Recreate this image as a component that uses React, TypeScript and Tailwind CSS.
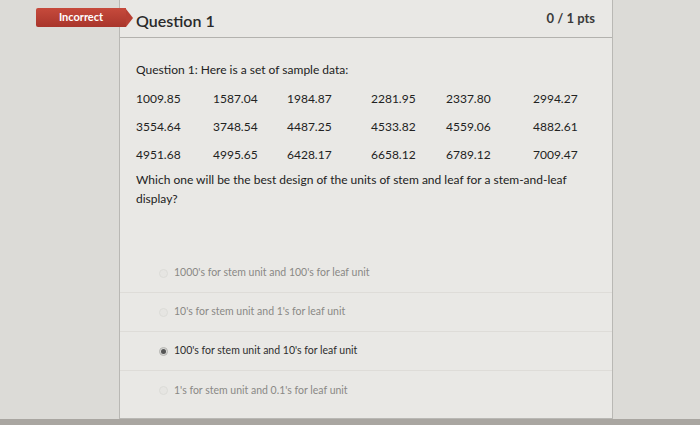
const rows = [
  ["1009.85", "1587.04", "1984.87", "2281.95", "2337.80", "2994.27"],
  ["3554.64", "3748.54", "4487.25", "4533.82", "4559.06", "4882.61"],
  ["4951.68", "4995.65", "6428.17", "6658.12", "6789.12", "7009.47"],
];

const answers = [
  { text: "1000's for stem unit and 100's for leaf unit", selected: false },
  { text: "10's for stem unit and 1's for leaf unit", selected: false },
  { text: "100's for stem unit and 10's for leaf unit", selected: true },
  { text: "1's for stem unit and 0.1's for leaf unit", selected: false },
];

export default function App() {
  return (
    <div
      className="w-[700px] h-[425px] overflow-hidden flex flex-col bg-[#dcdbd7]"
      style={{ fontFamily: "Lato, 'Open Sans', sans-serif" }}
    >
      <div className="flex flex-1">
        <div className="w-[119px] shrink-0" />
        {/* Card */}
        <div className="relative w-[494px] shrink-0 flex flex-col bg-[#e9e8e5] border-x border-b border-[#b9b8b4]">
          {/* Badge */}
          <div className="absolute left-[-84px] top-[8px] flex items-center">
            <div className="h-[19px] w-[90px] flex items-center justify-center rounded-l-[2px] bg-gradient-to-b from-[#c64a3c] to-[#a9352b] text-white text-[11px] font-bold">
              Incorrect
            </div>
            <div className="w-0 h-0 border-y-[9.5px] border-y-transparent border-l-[7px] border-l-[#b73f33]" />
          </div>

          {/* Header */}
          <div className="h-[38px] flex items-center justify-between pl-[16px] pr-[17px] border-b border-[#b3b2ae]">
            <h2 className="text-[16px] font-semibold text-[#2a2a2a] pt-[4px]">Question 1</h2>
            <span className="text-[13px] font-bold text-[#3a3a3a]">0 / 1 pts</span>
          </div>

          {/* Body */}
          <div className="pl-[16px] pr-[30px] pt-[23px] text-[12px] text-[#222]">
            <p>Question 1: Here is a set of sample data:</p>
            <div className="mt-[11px] flex flex-col gap-[10px]">
              {rows.map((r, i) => (
                <div key={i} className="grid grid-cols-[77px_74px_84px_75px_87px_1fr] h-[18px] items-center">
                  {r.map((v) => (
                    <span key={v}>{v}</span>
                  ))}
                </div>
              ))}
            </div>
            <p className="mt-[6px] leading-[19px]">
              Which one will be the best design of the units of stem and leaf for a stem-and-leaf display?
            </p>
          </div>

          {/* Answers */}
          <div className="mt-[46px] flex flex-col">
            {answers.map((a, i) => (
              <div
                key={i}
                className={`h-[39px] flex items-center pl-[39px] ${i < answers.length - 1 ? "border-b border-[#dedcd8]" : ""}`}
              >
                <span
                  className={`w-[9px] h-[9px] rounded-full border flex items-center justify-center ${
                    a.selected ? "border-[#b5b5b2] bg-[#d8d8d5]" : "border-[#dcdcd8] bg-[#e6e5e2]"
                  }`}
                >
                  {a.selected && <span className="w-[5px] h-[5px] rounded-full bg-[#555]" />}
                </span>
                <span
                  className={`ml-[6px] text-[10.5px] ${a.selected ? "text-[#2e2e2e]" : "text-[#8a8986]"}`}
                >
                  {a.text}
                </span>
              </div>
            ))}
          </div>
        </div>
        <div className="flex-1" />
      </div>
      <div className="h-[6px] bg-[#a9a6a1]" />
    </div>
  );
}
